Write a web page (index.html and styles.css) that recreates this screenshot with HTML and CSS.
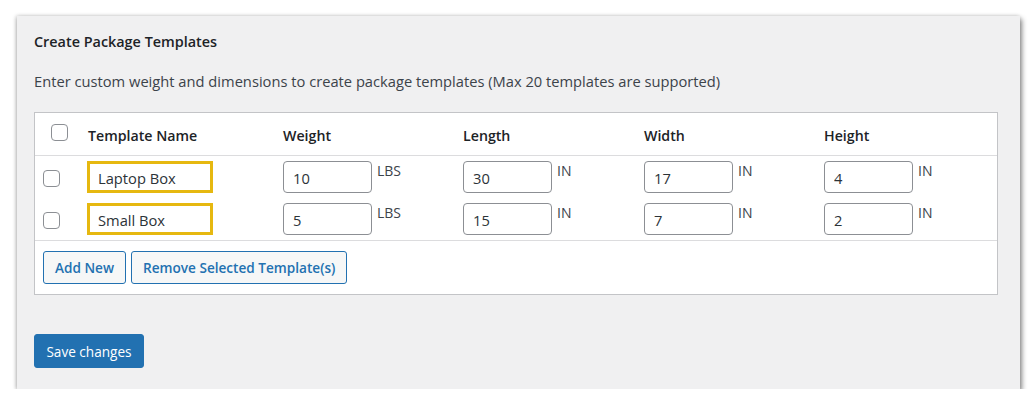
FILE: index.html
```html
<!DOCTYPE html>
<html>
<head>
<meta charset="utf-8">
<link rel="stylesheet" href="styles.css">
</head>
<body>
<div class="panel">
  <h2 class="title">Create Package Templates</h2>
  <p class="desc">Enter custom weight and dimensions to create package templates (Max 20 templates are supported)</p>
  <div class="table">
    <div class="row head">
      <div class="cell cb-head"><span class="cb"></span></div>
      <div class="cell">Template Name</div>
      <div class="cell">Weight</div>
      <div class="cell">Length</div>
      <div class="cell">Width</div>
      <div class="cell">Height</div>
    </div>
    <div class="body">
      <div class="row item">
        <div class="cell cb-row"><span class="cb"></span></div>
        <div class="cell"><input class="inp name" value="Laptop Box"></div>
        <div class="cell"><input class="inp num" value="10"><span class="unit">LBS</span></div>
        <div class="cell"><input class="inp num" value="30"><span class="unit">IN</span></div>
        <div class="cell"><input class="inp num" value="17"><span class="unit">IN</span></div>
        <div class="cell"><input class="inp num" value="4"><span class="unit">IN</span></div>
      </div>
      <div class="row item">
        <div class="cell cb-row"><span class="cb"></span></div>
        <div class="cell"><input class="inp name" value="Small Box"></div>
        <div class="cell"><input class="inp num" value="5"><span class="unit">LBS</span></div>
        <div class="cell"><input class="inp num" value="15"><span class="unit">IN</span></div>
        <div class="cell"><input class="inp num" value="7"><span class="unit">IN</span></div>
        <div class="cell"><input class="inp num" value="2"><span class="unit">IN</span></div>
      </div>
    </div>
    <div class="foot">
      <button class="btn-sec">Add New</button>
      <button class="btn-sec">Remove Selected Template(s)</button>
    </div>
  </div>
  <button class="btn-pri">Save changes</button>
</div>
</body>
</html>
```

FILE: styles.css
```css
* { box-sizing: border-box; }
body {
  margin: 0;
  background: #ffffff;
  font-family: "Open Sans", "Noto Sans", sans-serif;
  color: #3c434a;
}
.panel {
  margin: 16px 0 0 17px;
  width: 1003px;
  height: 373px;
  background: #f0f0f1;
  padding: 16px 22px 0 17px;
  box-shadow: 2px 3px 5px rgba(0,0,0,0.45), -1px 0 4px rgba(0,0,0,0.22);
}
.title {
  margin: 0;
  font-size: 14.4px;
  line-height: 20px;
  font-weight: 600;
  color: #1d2327;
}
.desc {
  margin: 19px 0 0;
  font-size: 14.7px;
  line-height: 20px;
  color: #3c434a;
}
.table {
  margin-top: 21px;
  background: #fff;
  border: 1px solid #c3c4c7;
  width: 964px;
}
.row {
  display: grid;
  grid-template-columns: 53px 195px 180px 181px 180px 1fr;
}
.head {
  height: 43px;
  border-bottom: 1px solid #dcdcde;
  align-items: center;
  font-size: 14.2px;
  font-weight: 600;
  color: #1d2327;
}
.head .cell { padding-top: 2px; }
.cb {
  display: block;
  width: 17px;
  height: 17px;
  border: 1px solid #8c8f94;
  border-radius: 4px;
  background: #fff;
}
.cb-head { padding-left: 16px; }
.head .cb-head { padding-top: 0; margin-top: -4px; }
.cb-row { padding-left: 8px; padding-top: 9px; }
.body {
  padding: 5px 0;
  border-bottom: 1px solid #dcdcde;
  display: flex;
  flex-direction: column;
  gap: 10px;
}
.item .cell {
  display: flex;
  align-items: flex-start;
}
.item .cb-row { display: block; }
.inp {
  height: 32px;
  border: 1px solid #8c8f94;
  border-radius: 4px;
  padding: 2px 8px 0 9px;
  font-family: "Open Sans", "Noto Sans", sans-serif;
  font-size: 14.7px;
  color: #2c3338;
  background: #fff;
  outline: none;
}
.name {
  width: 126px;
  margin-left: -1px;
  border: 3px solid #e6b810;
  border-radius: 0;
  padding-left: 8px;
}
.num { width: 89px; }
.unit {
  margin-left: 5px;
  font-size: 14px;
  line-height: 20px;
  color: #3c434a;
  margin-top: 0;
}
.foot {
  display: flex;
  gap: 5px;
  padding: 10px 8px 10px 8px;
}
.btn-sec {
  height: 33px;
  padding: 0 11px;
  border: 1px solid #2271b1;
  border-radius: 3px;
  background: #f6f7f7;
  color: #2271b1;
  font-family: "Open Sans", "Noto Sans", sans-serif;
  font-size: 13.6px;
  font-weight: 600;
}
.btn-pri {
  margin-top: 39px;
  height: 34px;
  width: 110px;
  border: 1px solid #2271b1;
  border-radius: 3px;
  background: #2271b1;
  color: #fff;
  font-family: "Open Sans", "Noto Sans", sans-serif;
  font-size: 13.6px;
  padding: 0;
}
```
